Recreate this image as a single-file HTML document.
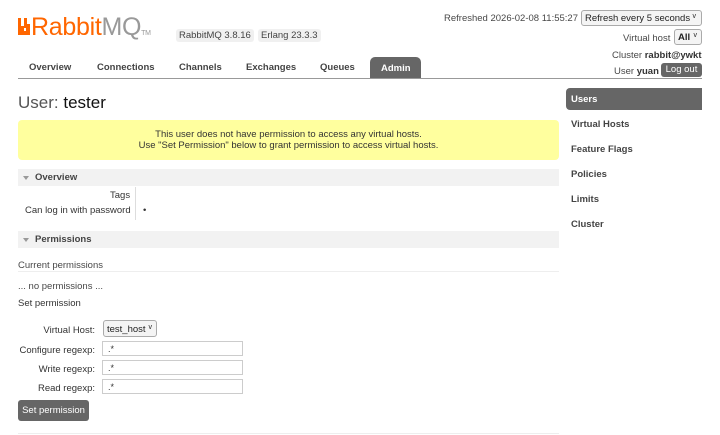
<!DOCTYPE html>
<html><head><style>
*{margin:0;padding:0;box-sizing:border-box}
body{width:720px;height:435px;background:#fff;font-family:"Liberation Sans",Verdana,sans-serif;font-size:9.5px;color:#484848;position:relative;overflow:hidden}
.a{position:absolute;white-space:nowrap}
b{color:#333}
.tab{position:absolute;top:62px;font-weight:bold;font-size:9.5px;color:#444}
.side{position:absolute;left:571px;font-weight:bold;font-size:9.5px;color:#444}
.hdr{position:absolute;left:18px;width:541px;height:17px;background:#f2f2f2}
.hdr span{position:absolute;left:17px;top:3px;font-weight:bold;font-size:9.5px;color:#444}
.hdr i{position:absolute;left:5px;top:7px;border-left:3.5px solid transparent;border-right:3.5px solid transparent;border-top:4px solid #999}
.inp{position:absolute;left:102px;width:141px;height:15px;border:1px solid #ccc;font-size:9px;color:#333;padding:2px 5px}
.lbl{position:absolute;width:95px;text-align:right;left:0;color:#333}
</style></head><body>
<svg class="a" style="left:18px;top:18px" width="12" height="17" viewBox="0 0 12 17"><path d="M0 0h3v8h3V0h3v6h3v11H0z M6 10v3h2v-3z" fill="#ff6600" fill-rule="evenodd"/></svg>
<div class="a" style="left:31px;top:13px;font-size:25px;color:#ff6600;letter-spacing:-0.3px">Rabbit<span style="color:#999">MQ</span><span style="font-size:7px;color:#999">TM</span></div>
<div class="a" style="left:176px;top:29px;background:#f0f0f0;padding:1px 3px;border-radius:3px;color:#444">RabbitMQ 3.8.16</div>
<div class="a" style="left:258px;top:29px;background:#f0f0f0;padding:1px 3px;border-radius:3px;color:#444">Erlang 23.3.3</div>

<div class="a" style="left:444px;top:13px">Refreshed 2026-02-08 11:55:27</div>
<div class="a" style="left:581px;top:10px;width:121px;height:16px;border:1px solid #aaa;border-radius:3px;background:#f4f4f4;color:#222;padding:2px 3px">Refresh every 5 seconds<span style="position:absolute;right:5px;font-size:7px">v</span></div>
<div class="a" style="left:623px;top:33px">Virtual host</div>
<div class="a" style="left:674px;top:29px;width:28px;height:16px;border:1px solid #aaa;border-radius:3px;background:#f4f4f4;color:#222;padding:2px 3px;font-weight:bold">All<span style="position:absolute;right:4px;font-size:7px;font-weight:normal">v</span></div>
<div class="a" style="left:612px;top:50px">Cluster <b>rabbit@ywkt</b></div>
<div class="a" style="left:614px;top:66px">User <b>yuan</b></div>
<div class="a" style="left:661px;top:63px;width:41px;height:14px;background:#666;color:#fff;border-radius:3px;text-align:center;line-height:14px">Log out</div>

<div class="tab" style="left:29px">Overview</div>
<div class="tab" style="left:97px">Connections</div>
<div class="tab" style="left:179px">Channels</div>
<div class="tab" style="left:246px">Exchanges</div>
<div class="tab" style="left:320px">Queues</div>
<div class="a" style="left:370px;top:57px;width:51px;height:21px;background:#666;border-radius:5px 5px 0 0;color:#fff;font-weight:bold;font-size:9.5px;padding:6px 0 0 11px">Admin</div>
<div class="a" style="left:18px;top:78px;width:684px;height:1px;background:#999"></div>

<div class="a" style="left:18px;top:93px;font-size:17px;color:#555">User: <span style="color:#111">tester</span></div>

<div class="a" style="left:18px;top:120px;width:541px;height:40px;background:#ffff9e;border-radius:4px;text-align:center;color:#333;padding-top:9px;line-height:11px">This user does not have permission to access any virtual hosts.<br>Use "Set Permission" below to grant permission to access virtual hosts.</div>

<div class="hdr" style="top:169px"><i></i><span>Overview</span></div>
<div class="a" style="left:110px;top:190px;color:#333">Tags</div>
<div class="a" style="left:25px;top:205px;color:#333">Can log in with password</div>
<div class="a" style="left:135px;top:187px;width:1px;height:33px;background:#ddd"></div>
<div class="a" style="left:143px;top:205px;color:#333">•</div>

<div class="hdr" style="top:231px"><i></i><span>Permissions</span></div>
<div class="a" style="left:18px;top:260px">Current permissions</div>
<div class="a" style="left:18px;top:271px;width:541px;height:1px;background:#eee"></div>
<div class="a" style="left:18px;top:281px">... no permissions ...</div>
<div class="a" style="left:18px;top:298px;color:#333">Set permission</div>

<div class="lbl" style="top:325px">Virtual Host:</div>
<div class="a" style="left:103px;top:320px;width:54px;height:17px;border:1px solid #aaa;border-radius:3px;background:#f4f4f4;color:#222;padding:3px 3px">test_host<span style="position:absolute;right:4px;font-size:7px">v</span></div>
<div class="lbl" style="top:345px">Configure regexp:</div>
<div class="inp" style="top:341px">.*</div>
<div class="lbl" style="top:364px">Write regexp:</div>
<div class="inp" style="top:360px">.*</div>
<div class="lbl" style="top:383px">Read regexp:</div>
<div class="inp" style="top:379px">.*</div>
<div class="a" style="left:18px;top:400px;width:71px;height:21px;background:#666;color:#fff;border-radius:3px;text-align:center;line-height:21px">Set permission</div>
<div class="a" style="left:18px;top:433px;width:541px;height:1px;background:#eee"></div>

<div class="a" style="left:566px;top:88px;width:136px;height:22px;background:#666;border-radius:4px 0 0 4px;color:#fff;font-weight:bold;font-size:9.5px;padding:6px 0 0 5px">Users</div>
<div class="side" style="top:119px">Virtual Hosts</div>
<div class="side" style="top:144px">Feature Flags</div>
<div class="side" style="top:169px">Policies</div>
<div class="side" style="top:194px">Limits</div>
<div class="side" style="top:219px">Cluster</div>
</body></html>
